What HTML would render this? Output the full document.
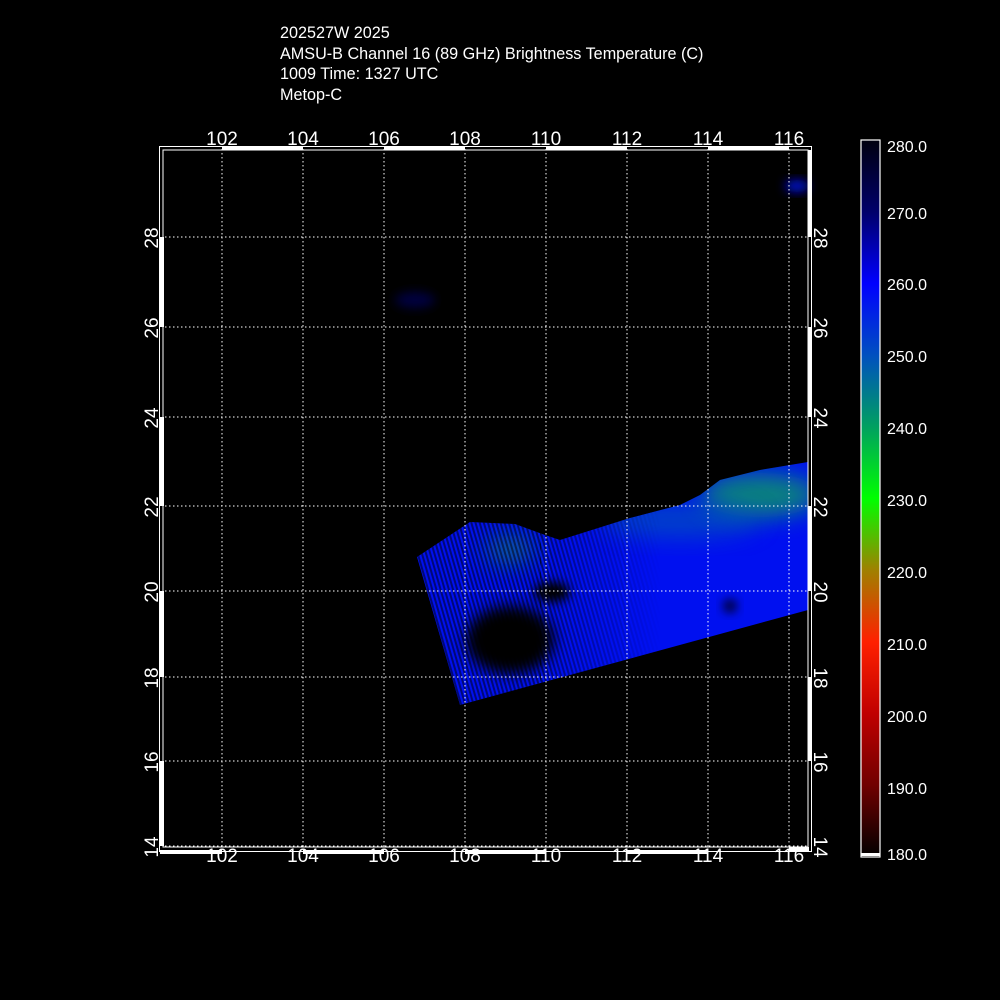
<!DOCTYPE html>
<html><head><meta charset="utf-8"><style>
html,body{margin:0;padding:0;background:#000;}
body{width:1000px;height:1000px;position:relative;overflow:hidden;font-family:"Liberation Sans",sans-serif;color:#fff;}
.t{position:absolute;left:280px;font-size:16.2px;line-height:17px;}
</style></head><body>
<div class="t" style="top:25px">202527W 2025</div>
<div class="t" style="top:46px">AMSU-B Channel 16 (89 GHz) Brightness Temperature (C)</div>
<div class="t" style="top:66px">1009 Time: 1327 UTC</div>
<div class="t" style="top:87px">Metop-C</div>
<svg width="1000" height="1000" style="position:absolute;left:0;top:0" xmlns="http://www.w3.org/2000/svg" font-family="Liberation Sans, sans-serif">
<defs>
<filter id="b" x="-50%" y="-50%" width="200%" height="200%"><feGaussianBlur stdDeviation="7"/></filter>
<filter id="b2" x="-50%" y="-50%" width="200%" height="200%"><feGaussianBlur stdDeviation="12"/></filter>
<filter id="b3" x="-50%" y="-50%" width="200%" height="200%"><feGaussianBlur stdDeviation="5"/></filter>
<clipPath id="sw"><polygon points="417,557 470,522 515,524 545,535 560,540 630,518 680,505 700,495 720,480 760,470 808,462 808,610 460,705"/></clipPath>
<pattern id="st" width="4" height="4" patternUnits="userSpaceOnUse" patternTransform="rotate(-16)"><rect width="2" height="4" fill="#000" opacity="0.5"/></pattern>
<linearGradient id="fade" x1="0" y1="0" x2="1" y2="0"><stop offset="0" stop-color="#fff"/><stop offset="1" stop-color="#000"/></linearGradient>
<mask id="fm"><rect x="540" y="450" width="120" height="270" fill="url(#fade)"/></mask>
<linearGradient id="cb" x1="0" y1="0" x2="0" y2="1">
<stop offset="0" stop-color="#000010"/>
<stop offset="0.1" stop-color="#00006a"/>
<stop offset="0.2" stop-color="#0000ff"/>
<stop offset="0.3" stop-color="#0050c0"/>
<stop offset="0.4" stop-color="#00a060"/>
<stop offset="0.5" stop-color="#00ff00"/>
<stop offset="0.6" stop-color="#a08000"/>
<stop offset="0.7" stop-color="#ff2000"/>
<stop offset="0.8" stop-color="#c00000"/>
<stop offset="0.9" stop-color="#700000"/>
<stop offset="1" stop-color="#000000"/>
</linearGradient>
</defs>
<g clip-path="url(#sw)">
<rect x="400" y="450" width="420" height="270" fill="#0010f0"/>
<ellipse cx="760" cy="495" rx="60" ry="22" fill="#10a060" filter="url(#b2)" opacity="0.8"/>
<ellipse cx="680" cy="520" rx="80" ry="18" fill="#0060b0" filter="url(#b2)" opacity="0.6"/>
<ellipse cx="510" cy="550" rx="25" ry="15" fill="#108070" filter="url(#b2)" opacity="0.7"/>
<rect x="400" y="450" width="141" height="270" fill="url(#st)"/>
<rect x="540" y="450" width="120" height="270" fill="url(#st)" mask="url(#fm)"/>
<ellipse cx="510" cy="640" rx="44" ry="34" fill="#000" filter="url(#b)"/>
<ellipse cx="552" cy="592" rx="18" ry="10" fill="#000" filter="url(#b3)"/>
<ellipse cx="730" cy="606" rx="7" ry="7" fill="#000030" filter="url(#b3)"/>
</g>
<ellipse cx="797" cy="186" rx="12" ry="6" fill="#0010d0" filter="url(#b3)"/>
<ellipse cx="415" cy="300" rx="20" ry="8" fill="#000040" filter="url(#b3)"/>
<g stroke="#fff" stroke-width="1" stroke-dasharray="1.5 2.5">
<line x1="222" y1="149" x2="222" y2="848"/><line x1="303" y1="149" x2="303" y2="848"/><line x1="384" y1="149" x2="384" y2="848"/><line x1="465" y1="149" x2="465" y2="848"/><line x1="546" y1="149" x2="546" y2="848"/><line x1="627" y1="149" x2="627" y2="848"/><line x1="708" y1="149" x2="708" y2="848"/><line x1="789" y1="149" x2="789" y2="848"/>
<line x1="165" y1="237" x2="808" y2="237"/><line x1="165" y1="327" x2="808" y2="327"/><line x1="165" y1="417" x2="808" y2="417"/><line x1="165" y1="506" x2="808" y2="506"/><line x1="165" y1="591" x2="808" y2="591"/><line x1="165" y1="677" x2="808" y2="677"/><line x1="165" y1="761" x2="808" y2="761"/><line x1="165" y1="846" x2="808" y2="846"/>
</g>
<rect x="159.5" y="146.5" width="652" height="705" fill="none" stroke="#fff" stroke-width="1"/>
<rect x="163" y="150" width="645" height="697" fill="none" stroke="#fff" stroke-width="1"/>
<g fill="#fff">
<rect x="222" y="146" width="81" height="4"/><rect x="384" y="146" width="81" height="4"/><rect x="546" y="146" width="81" height="4"/><rect x="708" y="146" width="81" height="4"/>
<rect x="160" y="850" width="62" height="4"/><rect x="303" y="850" width="81" height="4"/><rect x="465" y="850" width="81" height="4"/><rect x="627" y="850" width="81" height="4"/><rect x="789" y="847" width="20" height="4"/>
<rect x="160" y="237" width="4" height="90"/><rect x="160" y="417" width="4" height="89"/><rect x="160" y="591" width="4" height="86"/><rect x="160" y="761" width="4" height="85"/>
<rect x="808" y="150" width="4" height="87"/><rect x="808" y="327" width="4" height="90"/><rect x="808" y="506" width="4" height="85"/><rect x="808" y="677" width="4" height="84"/>
</g>
<g fill="#fff" font-size="19" text-anchor="middle">
<text x="222" y="145">102</text><text x="303" y="145">104</text><text x="384" y="145">106</text><text x="465" y="145">108</text><text x="546" y="145">110</text><text x="627" y="145">112</text><text x="708" y="145">114</text><text x="789" y="145">116</text>
<text x="222" y="862">102</text><text x="303" y="862">104</text><text x="384" y="862">106</text><text x="465" y="862">108</text><text x="546" y="862">110</text><text x="627" y="862">112</text><text x="708" y="862">114</text><text x="789" y="862">116</text>
<text transform="translate(158,238) rotate(-90)">28</text><text transform="translate(158,328) rotate(-90)">26</text><text transform="translate(158,418) rotate(-90)">24</text><text transform="translate(158,507) rotate(-90)">22</text><text transform="translate(158,592) rotate(-90)">20</text><text transform="translate(158,678) rotate(-90)">18</text><text transform="translate(158,762) rotate(-90)">16</text><text transform="translate(158,847) rotate(-90)">14</text>
<text transform="translate(814,238) rotate(90)">28</text><text transform="translate(814,328) rotate(90)">26</text><text transform="translate(814,418) rotate(90)">24</text><text transform="translate(814,507) rotate(90)">22</text><text transform="translate(814,592) rotate(90)">20</text><text transform="translate(814,678) rotate(90)">18</text><text transform="translate(814,762) rotate(90)">16</text><text transform="translate(814,847) rotate(90)">14</text>
</g>
<rect x="861" y="140" width="19" height="717" fill="url(#cb)" stroke="#fff" stroke-width="1.2"/>
<rect x="861" y="853" width="19" height="3" fill="#fff"/>
<g fill="#fff" font-size="16">
<text x="887" y="152">280.0</text><text x="887" y="219">270.0</text><text x="887" y="290">260.0</text><text x="887" y="362">250.0</text><text x="887" y="434">240.0</text><text x="887" y="506">230.0</text><text x="887" y="578">220.0</text><text x="887" y="650">210.0</text><text x="887" y="722">200.0</text><text x="887" y="794">190.0</text><text x="887" y="860">180.0</text>
</g>
</svg>
</body></html>
